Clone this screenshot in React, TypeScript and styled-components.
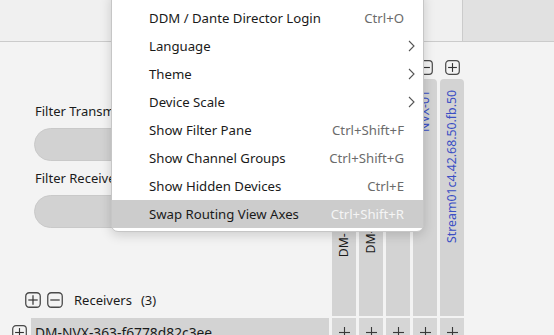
import React from "react";
import styled, { createGlobalStyle } from "styled-components";

const Global = createGlobalStyle`
  html, body { margin: 0; padding: 0; }
  body {
    width: 554px;
    height: 335px;
    overflow: hidden;
    background: #f3f3f3;
    font-family: "Noto Sans", "Open Sans", sans-serif;
    color: #1b1b1b;
  }
`;

const Page = styled.div`
  position: relative;
  width: 554px;
  height: 335px;
  overflow: hidden;
  display: flex;
  flex-direction: column;
  background: #f3f3f3;
`;

const TopBar = styled.div`
  height: 41px;
  flex: none;
  display: flex;
  background: #f0f0f0;
  border-bottom: 1px solid #cbcbcb;
`;

const TopFill = styled.div`
  flex: 1;
`;

const TopSide = styled.div`
  width: 91px;
  background: #e1e1e1;
  border-left: 1px solid #cbcbcb;
`;

const Matrix = styled.div`
  display: grid;
  grid-template-columns: 329px repeat(5, 24px);
  grid-template-rows: 274px 28px;
  column-gap: 3px;
  row-gap: 2px;
`;

const FilterPane = styled.div`
  display: flex;
  flex-direction: column;
  padding-top: 60px;
`;

const FilterBlock = styled.div`
  display: flex;
  flex-direction: column;
  padding: 0 20px 0 34px;
`;

const FilterLabel = styled.div`
  font-size: 13px;
  line-height: 18px;
  height: 18px;
  padding-left: 1px;
  margin-bottom: 8px;
`;

const Pill = styled.div`
  height: 31px;
  border: 1px solid #c9c9c9;
  background: #d2d2d2;
  border-radius: 17px;
  margin-bottom: 8px;
`;

const GroupHeader = styled.div`
  margin-top: auto;
  margin-bottom: 7px;
  display: flex;
  align-items: center;
  height: 18px;
  padding-left: 25px;
  gap: 6px;
  font-size: 13px;
`;

const GroupTitle = styled.span`
  margin-left: 5px;
`;

const Count = styled.span`
  margin-left: 3px;
`;

const ColumnHead = styled.div`
  display: flex;
  flex-direction: column;
  align-items: center;
  padding-top: 18px;
`;

const ColumnBody = styled.div`
  margin-top: 4px;
  align-self: stretch;
  flex: 1;
  background: #d3d3d3;
  border-radius: 4px 4px 0 0;
  display: flex;
  justify-content: center;
  padding-top: 11px;
  overflow: hidden;
`;

const VerticalLabel = styled.span<{ $blue?: boolean }>`
  writing-mode: vertical-rl;
  transform: rotate(180deg);
  font-size: 12.3px;
  line-height: 24px;
  white-space: nowrap;
  align-self: flex-start;
  color: ${(p) => (p.$blue ? "#3b4fc4" : "#1b1b1b")};
`;

const RowHead = styled.div`
  display: flex;
  align-items: center;
  padding-left: 12px;
  gap: 4px;
`;

const RowBar = styled.div`
  flex: 1;
  align-self: stretch;
  background: #d3d3d3;
  display: flex;
  align-items: center;
  padding-left: 4px;
  font-size: 13.8px;
  white-space: nowrap;
`;

const Cell = styled.div`
  background: #d6d6d6;
  display: flex;
  align-items: center;
  justify-content: center;
`;

const Menu = styled.div`
  position: absolute;
  left: 111px;
  top: -6px;
  width: 313px;
  box-sizing: border-box;
  padding: 9px 0 3px;
  background: #ffffff;
  border: 1px solid #c6c6c6;
  border-radius: 0 0 7px 7px;
  box-shadow: 0 3px 12px rgba(0, 0, 0, 0.16);
`;

const MenuItem = styled.div<{ $active?: boolean }>`
  height: 28px;
  display: flex;
  align-items: center;
  padding: 0 8px 0 37px;
  font-size: 13.2px;
  color: #1a1a1a;
  background: ${(p) => (p.$active ? "#cccccc" : "transparent")};
`;

const ItemLabel = styled.span`
  flex: 1;
  white-space: nowrap;
`;

const Shortcut = styled.span<{ $active?: boolean }>`
  padding-right: 11px;
  color: ${(p) => (p.$active ? "#f5f5f5" : "#6b6b6b")};
  white-space: nowrap;
`;

const BoxIcon = ({ minus = false, size = 16 }: { minus?: boolean; size?: number }) => (
  <svg width={size} height={size} viewBox="0 0 16 16" style={{ flex: "none", display: "block" }}>
    <rect x="0.75" y="0.75" width="14.5" height="14.5" rx="3.5" fill="none" stroke="#4a4a4a" strokeWidth="1.3" />
    <line x1="3.3" y1="8" x2="12.7" y2="8" stroke="#333" strokeWidth="1.2" />
    {!minus && <line x1="8" y1="3.3" x2="8" y2="12.7" stroke="#333" strokeWidth="1.2" />}
  </svg>
);

const Chevron = () => (
  <svg width="7" height="12" viewBox="0 0 7 12" style={{ display: "block" }}>
    <polyline points="1,1 6,6 1,11" fill="none" stroke="#555" strokeWidth="1.1" />
  </svg>
);

const PlusMark = () => (
  <svg width="11" height="11" viewBox="0 0 11 11" style={{ display: "block" }}>
    <line x1="0" y1="5.5" x2="11" y2="5.5" stroke="#3a3a3a" strokeWidth="1.1" />
    <line x1="5.5" y1="0" x2="5.5" y2="11" stroke="#3a3a3a" strokeWidth="1.1" />
  </svg>
);

const columns = [
  { label: "DM-NVX-360C-00107fd0a4b2", blue: false, minus: false },
  { label: "DM-NVX-352C-00107ff1e2a3", blue: false, minus: false },
  { label: "NVX-02", blue: true, minus: false },
  { label: "NVX-01", blue: true, minus: true },
  { label: "Stream01c4.42.68.50.fb.50", blue: true, minus: false },
];

const menuItems: { label: string; shortcut?: string; sub?: boolean; active?: boolean }[] = [
  { label: "DDM / Dante Director Login", shortcut: "Ctrl+O" },
  { label: "Language", sub: true },
  { label: "Theme", sub: true },
  { label: "Device Scale", sub: true },
  { label: "Show Filter Pane", shortcut: "Ctrl+Shift+F" },
  { label: "Show Channel Groups", shortcut: "Ctrl+Shift+G" },
  { label: "Show Hidden Devices", shortcut: "Ctrl+E" },
  { label: "Swap Routing View Axes", shortcut: "Ctrl+Shift+R", active: true },
];

export default function App() {
  return (
    <Page>
      <Global />
      <TopBar>
        <TopFill />
        <TopSide />
      </TopBar>
      <Matrix>
        <FilterPane>
          <FilterBlock>
            <FilterLabel>Filter Transmitters</FilterLabel>
            <Pill />
            <FilterLabel>Filter Receivers</FilterLabel>
            <Pill />
          </FilterBlock>
          <GroupHeader>
            <BoxIcon />
            <BoxIcon minus />
            <GroupTitle>Receivers</GroupTitle>
            <Count>(3)</Count>
          </GroupHeader>
        </FilterPane>
        {columns.map((c) => (
          <ColumnHead key={c.label}>
            <BoxIcon minus={c.minus} size={15} />
            <ColumnBody>
              <VerticalLabel $blue={c.blue}>{c.label}</VerticalLabel>
            </ColumnBody>
          </ColumnHead>
        ))}
        <RowHead>
          <BoxIcon size={15} />
          <RowBar>DM-NVX-363-f6778d82c3ee</RowBar>
        </RowHead>
        {columns.map((c) => (
          <Cell key={c.label}>
            <PlusMark />
          </Cell>
        ))}
      </Matrix>
      <Menu>
        {menuItems.map((m) => (
          <MenuItem key={m.label} $active={m.active}>
            <ItemLabel>{m.label}</ItemLabel>
            {m.shortcut && <Shortcut $active={m.active}>{m.shortcut}</Shortcut>}
            {m.sub && <Chevron />}
          </MenuItem>
        ))}
      </Menu>
    </Page>
  );
}
